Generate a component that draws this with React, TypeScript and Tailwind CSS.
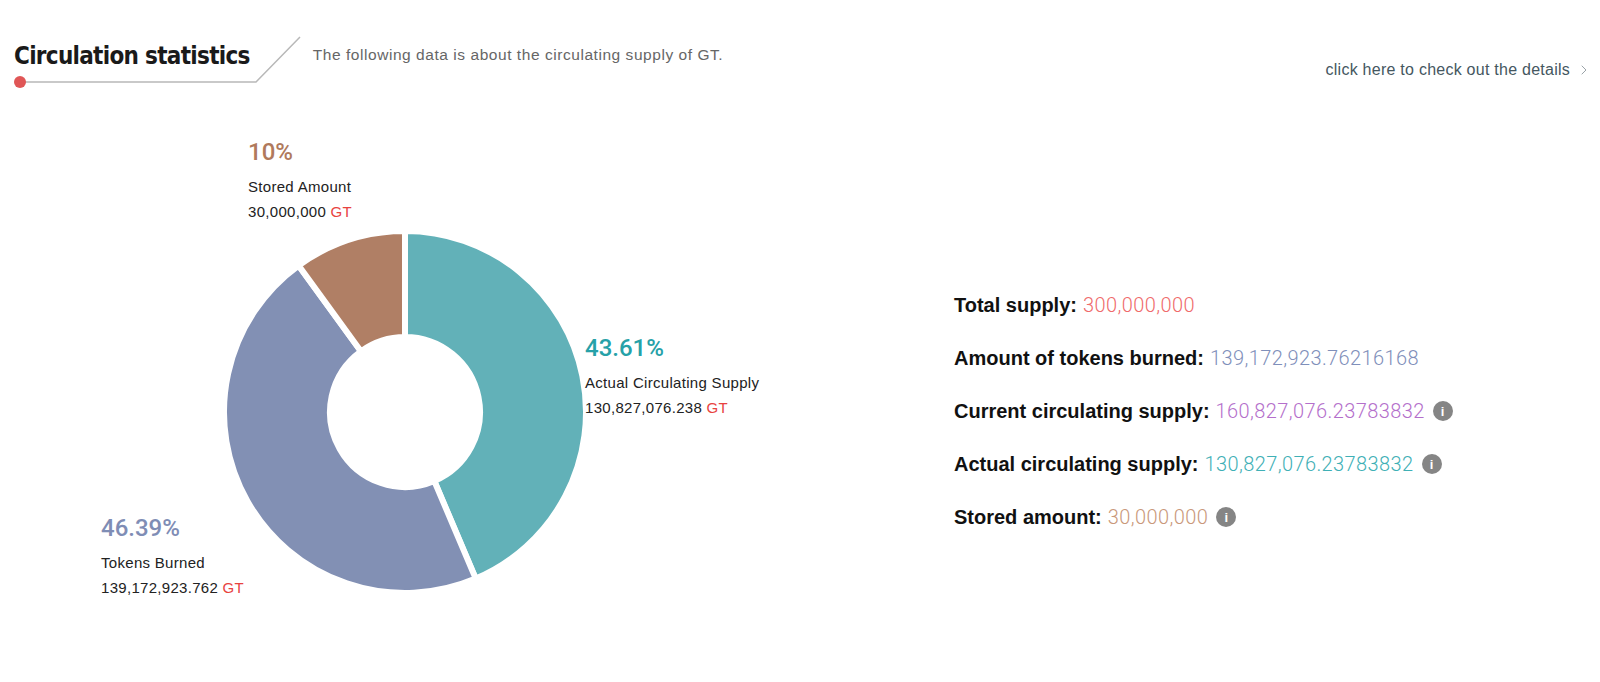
import { ChevronRight } from "lucide-react";

type Slice = { id: string; value: number; color: string };

const slices: Slice[] = [
  { id: "actual", value: 43.61, color: "#62b1b8" },
  { id: "burned", value: 46.39, color: "#8290b4" },
  { id: "stored", value: 10, color: "#b07f65" },
];

const stats = [
  { label: "Total supply:", value: "300,000,000", color: "text-[#ef6b6b]", info: false },
  { label: "Amount of tokens burned:", value: "139,172,923.76216168", color: "text-[#7f8fba]", info: false },
  { label: "Current circulating supply:", value: "160,827,076.23783832", color: "text-[#b46fcb]", info: true },
  { label: "Actual circulating supply:", value: "130,827,076.23783832", color: "text-[#3fb0b6]", info: true },
  { label: "Stored amount:", value: "30,000,000", color: "text-[#c9987a]", info: true },
];

function arcPath(cx: number, cy: number, r1: number, r2: number, a0: number, a1: number) {
  const pt = (r: number, a: number) => {
    const rad = ((a - 90) * Math.PI) / 180;
    return `${cx + r * Math.cos(rad)} ${cy + r * Math.sin(rad)}`;
  };
  const large = a1 - a0 > 180 ? 1 : 0;
  return `M ${pt(r2, a0)} A ${r2} ${r2} 0 ${large} 1 ${pt(r2, a1)} L ${pt(r1, a1)} A ${r1} ${r1} 0 ${large} 0 ${pt(r1, a0)} Z`;
}

function Donut() {
  let start = 0;
  return (
    <svg width="362" height="362" viewBox="0 0 362 362" className="absolute left-[224px] top-[131px]">
      {slices.map((s) => {
        const end = start + (s.value / 100) * 360;
        const d = arcPath(181, 181, 75, 181, start, end);
        start = end;
        return <path key={s.id} d={d} fill={s.color} stroke="#ffffff" strokeWidth="6" strokeLinejoin="miter" />;
      })}
    </svg>
  );
}

function ChartLabel({
  percent,
  color,
  label,
  amount,
  className,
}: {
  percent: string;
  color: string;
  label: string;
  amount: string;
  className: string;
}) {
  return (
    <div className={`absolute font-['Liberation_Sans',sans-serif] text-[15px] tracking-[0.3px] text-[#222] ${className}`}>
      <div className={`font-['Roboto',sans-serif] text-[24px] font-medium leading-[30px] tracking-normal ${color}`}>
        {percent}
      </div>
      <div className="mt-[7px] whitespace-nowrap leading-[25px]">{label}</div>
      <div className="whitespace-nowrap leading-[25px]">
        {amount} <span className="text-[#e8423f]">GT</span>
      </div>
    </div>
  );
}

function InfoIcon() {
  return (
    <span className="ml-[8px] inline-flex h-[20px] w-[20px] items-center justify-center rounded-full bg-[#858585] font-['Liberation_Sans',sans-serif] text-[13px] font-bold leading-none text-white">
      i
    </span>
  );
}

export default function App() {
  return (
    <div className="h-[682px] w-[1600px] overflow-hidden bg-white">
      <header className="relative flex h-[100px] items-start">
        <svg width="1000" height="100" className="absolute left-0 top-0">
          <defs>
            <linearGradient id="fade" x1="0" y1="0" x2="1" y2="0">
              <stop offset="0.85" stopColor="#b8b8b8" />
              <stop offset="1" stopColor="#b8b8b8" stopOpacity="0" />
            </linearGradient>
          </defs>
          <polyline points="20,82 256,82 300,37" fill="none" stroke="#b8b8b8" strokeWidth="1.5" />
          <line x1="300" y1="37" x2="940" y2="37" stroke="url(#fade)" strokeWidth="1.5" />
          <circle cx="20" cy="82" r="6" fill="#e05656" />
        </svg>
        <h1 className="relative ml-[14px] mt-[40px] font-['DejaVu_Sans_Condensed','DejaVu_Sans',sans-serif] text-[24px] font-bold leading-[32px] tracking-[-0.7px] text-[#1a1a1a] [font-stretch:condensed]">
          Circulation statistics
        </h1>
        <p className="relative ml-[63px] mt-[44px] font-['Liberation_Sans',sans-serif] text-[15.5px] leading-[22px] tracking-[0.55px] text-[#666]">
          The following data is about the circulating supply of GT.
        </p>
        <a className="relative ml-auto mr-[8px] mt-[59px] flex items-center gap-[6px] font-['Liberation_Sans',sans-serif] text-[16px] leading-[22px] tracking-[0.25px] text-[#45575f]">
          click here to check out the details
          <ChevronRight className="h-[16px] w-[16px] text-[#9aa3a8]" strokeWidth={1.5} />
        </a>
      </header>

      <main className="flex">
        <div className="relative h-[520px] w-[880px] shrink-0">
          <Donut />
          <ChartLabel
            className="left-[248px] top-[37px]"
            percent="10%"
            color="text-[#b07a5c]"
            label="Stored Amount"
            amount="30,000,000"
          />
          <ChartLabel
            className="left-[585px] top-[233px]"
            percent="43.61%"
            color="text-[#26a1a8]"
            label="Actual Circulating Supply"
            amount="130,827,076.238"
          />
          <ChartLabel
            className="left-[101px] top-[413px]"
            percent="46.39%"
            color="text-[#7f8db5]"
            label="Tokens Burned"
            amount="139,172,923.762"
          />
        </div>

        <div className="ml-[74px] mt-[191px] flex flex-col gap-[25px]">
          {stats.map((s) => (
            <div key={s.label} className="flex h-[28px] items-center whitespace-nowrap text-[20px] leading-[28px]">
              <span className="font-['Liberation_Sans',sans-serif] font-bold text-[#111]">{s.label}</span>
              <span className={`ml-[6px] font-['Roboto',sans-serif] font-light tracking-[0.4px] ${s.color}`}>
                {s.value}
              </span>
              {s.info && <InfoIcon />}
            </div>
          ))}
        </div>
      </main>
    </div>
  );
}
